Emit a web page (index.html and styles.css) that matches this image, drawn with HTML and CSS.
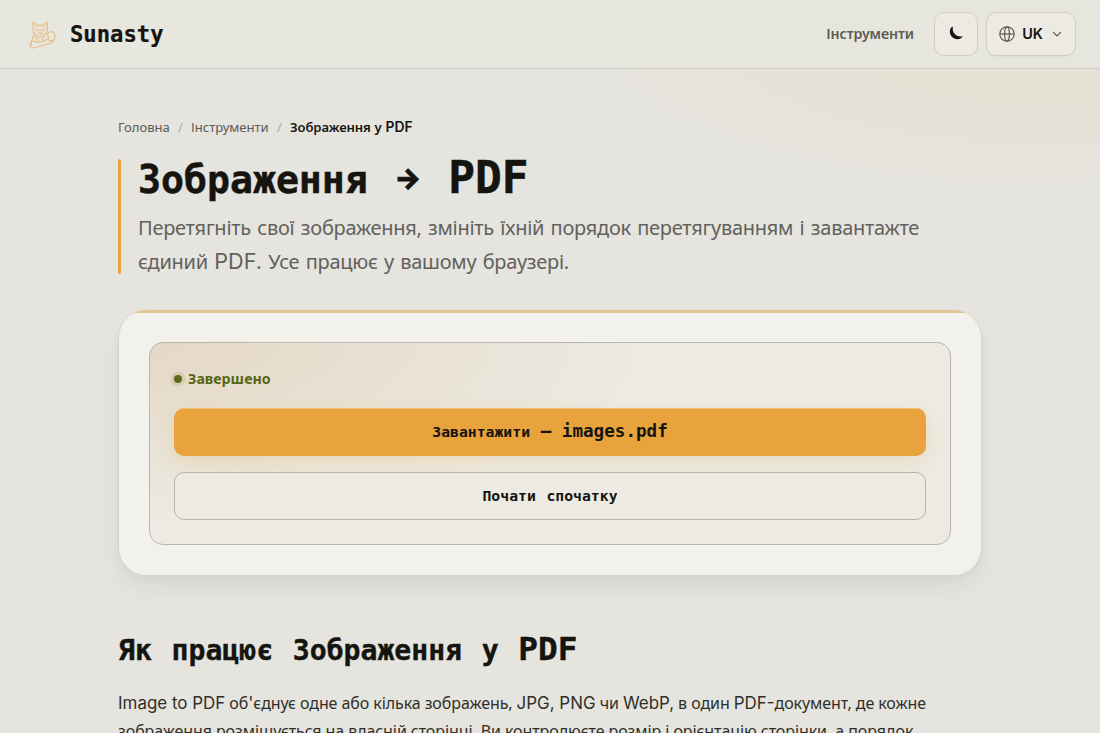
FILE: index.html
```html
<!DOCTYPE html>
<html lang="uk">
<head>
<meta charset="utf-8">
<title>Зображення у PDF — Sunasty</title>
<link rel="stylesheet" href="styles.css">
</head>
<body>
<header class="topbar">
  <a class="brand">
    <svg class="brand-icon" viewBox="0 0 40 40" fill="none" stroke="#e8b66c" stroke-width="1.2" stroke-linejoin="round" stroke-linecap="round">
      <path fill="#e8b66c" fill-opacity=".15" d="M11 18 L11 8 L15.500 11.500 Q18.500 10.500 21 11.500 L25 8 L25.500 17 Q23 23 18 23 Q13 23 11 18Z"/>
      <path d="M14 16l2.500.500M22 16l-2.500.500M17 19l1.500 1 1.500-1M12 21q-3 5-3 10M25 20q2 3 2 7M9 29q-2 2 0 4 2 1.500 5 .500l12-3.500q5-1 6-4M26 19q5-3 6.500 1 1.500 6-3 7-3 0-3.500-4M11 27q7 3 15-2M14 23l2 4M22 22l-2 5"/>
    </svg>
    <span class="brand-name">Sunasty</span>
  </a>
  <nav class="nav">
    <a class="nav-link">Інструменти</a>
    <button class="tool-btn theme"><svg width="16" height="16" viewBox="0 0 16 16"><path fill="#15140f" d="M3.600 1 C1 4 1.500 8.300 4.200 11 C7.200 14 12.500 14 15 10.200 C11.800 11 9 10.400 7 8.300 C5 6.300 4.200 3.800 5 1.300 Q4.600.200 3.600 1Z"/></svg></button>
    <button class="tool-btn lang">
      <svg width="16" height="16" viewBox="0 0 16 16" fill="none" stroke="#5c5b54" stroke-width="1.200"><circle cx="8" cy="8" r="7.200"/><ellipse cx="8" cy="8" rx="2.400" ry="7.200"/><path d="M1 8h14"/></svg>
      <span class="latin">UK</span>
      <svg width="10" height="10" viewBox="0 0 10 10" fill="none" stroke="#5c5b54" stroke-width="1.100"><path d="M1 3l4 4 4-4"/></svg>
    </button>
  </nav>
</header>
<main class="page">
  <nav class="crumbs"><a>Головна</a><i>/</i><a>Інструменти</a><i>/</i><b>Зображення у <span class="latin">PDF</span></b></nav>
  <section class="hero">
    <h1><span class="cy">Зображення</span> <span class="arrow">→</span> PDF</h1>
    <p>Перетягніть свої зображення, змініть їхній порядок перетягуванням і завантажте єдиний <span class="latin">PDF.</span> Усе працює у вашому браузері.</p>
  </section>
  <section class="card">
    <div class="result">
      <div class="status"><span class="dot"></span>Завершено</div>
      <button class="btn primary"><span class="cy">Завантажити</span> — images.pdf</button>
      <button class="btn secondary"><span class="cy">Почати</span> <span class="cy">спочатку</span></button>
    </div>
  </section>
  <section class="about">
    <h2><span class="cy">Як</span> <span class="cy">працює</span> <span class="cy">Зображення</span> <span class="cy">у</span> PDF</h2>
    <p><span class="latin">Image to PDF</span> об<span class="latin">'</span>єднує одне або кілька зображень, <span class="latin">JPG, PNG</span> чи <span class="latin">WebP,</span> в один <span class="latin">PDF-</span>документ, де кожне зображення розміщується на власній сторінці. Ви контролюєте розмір і орієнтацію сторінки, а порядок</p>
  </section>
</main>
</body>
</html>
```
FILE: styles.css
```css
* { box-sizing: border-box; }
body {
  margin: 0;
  height: 733px;
  overflow: hidden;
  color: #15140f;
  font-family: "Noto Sans", sans-serif;
  background: radial-gradient(ellipse 540px 190px at 1060px 20px, #e5e1d2 0%, rgba(229,225,211,.75) 45%, rgba(229,228,223,0) 100%), #e5e4df;
}
h1, h2, p { margin: 0; }
.latin { font-family: Inter, sans-serif; font-size: 1.06em; line-height: 1; letter-spacing: 0; }
.topbar {
  height: 69px;
  padding: 0 24px 0 22px;
  display: flex;
  align-items: center;
  justify-content: space-between;
  border-bottom: 1px solid #cdccc5;
  background: rgba(231,230,223,.85);
}
.brand { display: flex; align-items: center; gap: 8px; }
.brand-icon { width: 40px; height: 40px; opacity: .75; }
.brand-name { font: bold 22.200px "DejaVu Sans Mono", monospace; -webkit-text-stroke: .2px; }
.nav { display: flex; align-items: center; gap: 8px; }
.nav-link { font-size: 14.200px; font-weight: 600; letter-spacing: -.1px; color: #5c5b54; margin: -2px 12px 0 0; }
.tool-btn {
  height: 44px;
  display: flex;
  align-items: center;
  justify-content: center;
  background: #eceae3;
  border: 1px solid #d0cec7;
  border-radius: 10px;
  padding: 0;
  color: #15140f;
}
.theme { width: 44px; }
.lang { width: 90px; padding-right: 1px; gap: 7px; font-size: 14px; font-weight: 600; box-shadow: 0 1px 2px rgba(0,0,0,.04); }
.lang .latin { font-size: 14.400px; }
.lang svg:last-child { margin-left: 2px; }
.page { width: 864px; margin: 0 auto; padding-top: 48px; }
.crumbs { display: flex; font-size: 13.100px; line-height: 20px; color: #5c5b54; }
.crumbs a { letter-spacing: -.04px; }
.crumbs i { font-style: normal; color: #aaa9a2; margin: 0 8.200px; }
.crumbs b { font-weight: 600; letter-spacing: -.1px; word-spacing: .5px; color: #15140f; }
.hero { margin-top: 22px; padding-left: 20px; height: 115px; display: grid; grid-template-rows: 37px 68px; row-gap: 15px; align-content: start; position: relative; }
.hero::before { content: ""; position: absolute; left: 0; top: 0; bottom: 0; width: 3px; border-radius: 2px; background: #e8a33d; }
h1 { font: bold 44.400px/37px "DejaVu Sans Mono", monospace; white-space: nowrap; -webkit-text-stroke: .5px; }
.cy { font-size: .86em; }
.arrow { display: inline-block; width: 27px; font: 800 28px/20px Inter, sans-serif; vertical-align: 5px; -webkit-text-stroke: 1px; }
.hero p { font-size: 20px; line-height: 34px; letter-spacing: -.27px; word-spacing: 1.450px; color: #62615b; }
.hero p .latin { font-size: 1.08em; }
.card {
  margin-top: 36px;
  height: 266px;
  padding: 32px 30px 0;
  border: 1px solid #d3d2cb;
  border-top: 0;
  border-radius: 28px;
  background: linear-gradient(#e4c494 0 3px, #f2f1ec 3px);
  box-shadow: 0 12px 24px -4px rgba(40,38,25,.08), 0 2px 6px rgba(40,38,25,.03);
}
.result {
  height: 203px;
  border: 1px solid #b8b6ae;
  border-radius: 14px;
  padding: 24px;
  background: radial-gradient(ellipse 500px 180px at 0 0, #e5d8c5, #eceae2 100%);
}
.status { display: flex; align-items: center; gap: 6px; height: 24px; margin-top: -1px; font-size: 14.200px; font-weight: 700; color: #566614; }
.dot { width: 8px; height: 8px; margin-top: 2px; border-radius: 50%; background: #5b6a19; box-shadow: 0 0 0 3.500px #dacdb1; }
.btn { display: block; width: 100%; height: 48px; border-radius: 10px; font: bold 17.600px "DejaVu Sans Mono", monospace; color: #15140f; padding: 0 0 2px; }
.btn .cy { font-size: .84em; }
.primary { margin-top: 18px; border: 0; background: #e8a33d; box-shadow: inset 0 2px 0 -1px #f0bd72, 0 6px 18px rgba(232,163,61,.2); }
.secondary { margin-top: 16px; border: 1px solid #b8b6ae; background: #eceae2; }
.about { margin-top: 53px; }
h2 { font: bold 32.700px/40px "DejaVu Sans Mono", monospace; white-space: nowrap; -webkit-text-stroke: .4px; }
.about p { margin-top: 18px; font-size: 16px; line-height: 28px; letter-spacing: -.08px; color: #302f29; }
```
